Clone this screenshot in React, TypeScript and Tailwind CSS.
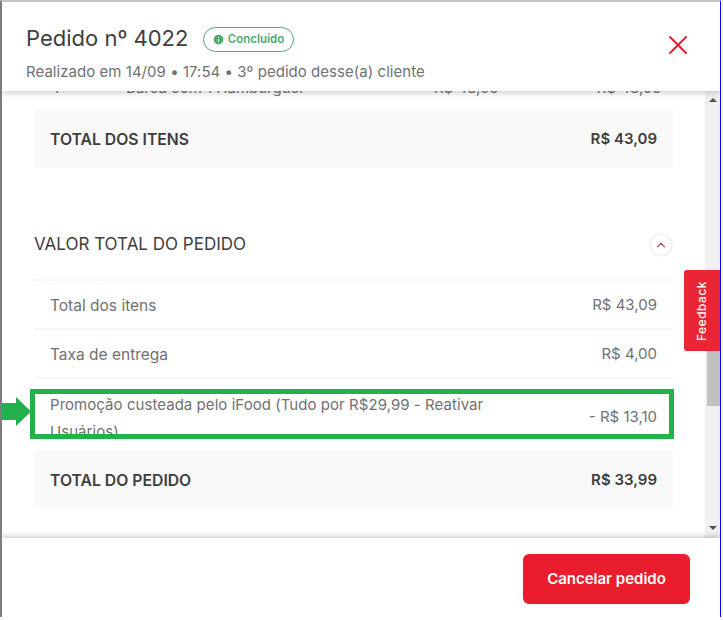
import { ChevronUp, Info, X } from 'lucide-react';

const font = "font-['Inter','Noto_Sans',sans-serif]";

function Row({ label, value }: { label: string; value: string }) {
  return (
    <div className="flex h-[49px] items-center justify-between border-t-2 border-[#f5f5f5] px-4 pt-[2px] text-[#717171]">
      <span className="text-[15.5px]">{label}</span>
      <span className="text-[15px]">{value}</span>
    </div>
  );
}

function TotalRow({ label, value }: { label: string; value: string }) {
  return (
    <div className="flex h-[58px] items-center justify-between bg-[#f9f9f9] px-4 pt-[3px] font-semibold text-[#3e3e3e]">
      <span className="text-[15.75px]">{label}</span>
      <span className="text-[15px]">{value}</span>
    </div>
  );
}

export default function App() {
  return (
    <div className={`${font} relative flex h-[617px] w-[721px] flex-col overflow-hidden border-t-2 border-r border-l-2 border-t-[#c4c4c4] border-r-[#0000ff] border-l-[#7d7d7d] bg-white`}>
      <header className="relative z-10 flex h-[89px] shrink-0 items-start justify-between bg-white pr-[26px] pl-6 shadow-[0_2px_6px_rgba(0,0,0,0.2)]">
        <div>
          <div className="mt-[21px] flex items-center">
            <h1 className="text-[22px] leading-[30px] font-normal text-[#3e3e3e]">Pedido nº 4022</h1>
            <span className="mt-[3px] ml-[15px] flex h-[25px] w-[91px] items-center justify-center gap-[3px] rounded-full border border-[#50a773] pr-[2px] text-[11.5px] font-semibold text-[#50a773]">
              <Info size={13} fill="#50a773" stroke="#ffffff" />
              Concluído
            </span>
          </div>
          <p className="mt-[9px] text-[15px] leading-5 tracking-[0.04px] text-[#717171]">Realizado em 14/09 • 17:54 • 3º pedido desse(a) cliente</p>
        </div>
        <button className="mt-[27px] text-[#ea1d2c]">
          <X size={32} strokeWidth={1.5} />
        </button>
      </header>

      <div className="flex min-h-0 flex-1">
        <main className="relative min-w-0 flex-1 overflow-hidden px-8">
          <div className="absolute top-[-14px] left-0 flex w-full text-[15px] whitespace-nowrap text-[#717171]">
            <span className="ml-[51px]">1</span>
            <span className="ml-[67px]">Barca com 1 Hamburguer</span>
            <span className="ml-[129px]">R$ 43,09</span>
            <span className="ml-[98px]">R$ 43,09</span>
          </div>
          <div className="mt-[18px]">
            <TotalRow label="TOTAL DOS ITENS" value="R$ 43,09" />
          </div>
          <div className="mt-[51px] flex h-[54px] items-center justify-between">
            <h2 className="text-[17px] font-normal text-[#3e3e3e]">VALOR TOTAL DO PEDIDO</h2>
            <span className="flex h-6 w-6 items-center justify-center rounded-full border-2 border-[#f2f2f2] text-[#a8525c]">
              <ChevronUp size={14} />
            </span>
          </div>
          <div className="mt-[7px]">
            <Row label="Total dos itens" value="R$ 43,09" />
            <Row label="Taxa de entrega" value="R$ 4,00" />
            <div className="flex h-[73px] items-start justify-between border-t-2 border-[#f5f5f5] px-4 text-[15px] text-[#717171]">
              <span className="mt-3 h-[43px] w-[474px] overflow-hidden leading-[27px] tracking-[0.05px]">Promoção custeada pelo iFood (Tudo por R$29,99 - Reativar Usuários)</span>
              <span className="mt-[27px]">- R$ 13,10</span>
            </div>
          </div>
          <TotalRow label="TOTAL DO PEDIDO" value="R$ 33,99" />

          {/* annotation drawn over the screenshot */}
          <div className="absolute top-[298px] left-[28px] h-[50px] w-[644px] border-[5px] border-[#22b14c]" />
          <svg className="absolute top-[306px] left-0" width="30" height="30" viewBox="0 0 30 30">
            <path d="M0 6h14V0l15 14.5-15 14.5v-6H0z" fill="#22b14c" />
          </svg>
        </main>

        <aside className="flex w-[15px] shrink-0 flex-col items-center justify-between bg-[#f1f1f1] pt-[7px] pb-2">
          <span className="h-0 w-0 border-x-[4px] border-b-[4px] border-x-transparent border-b-[#505050]" />
          <span className="h-0 w-0 border-x-[4px] border-t-[4px] border-x-transparent border-t-[#505050]" />
        </aside>
      </div>

      <footer className="relative z-10 flex h-[79px] shrink-0 items-start justify-end bg-white pt-[16px] pr-[30px] shadow-[0_-2px_5px_rgba(0,0,0,0.2)]">
        <button className="h-[50px] w-[167px] rounded-[6px] bg-[#ea1d2c] text-[15px] font-semibold text-white">Cancelar pedido</button>
      </footer>

      {/* scrollbar thumb and feedback tab overlap the content */}
      <div className="absolute top-[348px] right-0 h-[56px] w-[13px] bg-[#c1c1c1]" />
      <div className="absolute top-[268px] right-0 z-20 flex h-[81px] w-[36px] items-center justify-center rounded-l-[3px] bg-[#ea2636] text-[12px] font-medium tracking-[0.5px] text-white">
        <span className="-rotate-90">Feedback</span>
      </div>
    </div>
  );
}
